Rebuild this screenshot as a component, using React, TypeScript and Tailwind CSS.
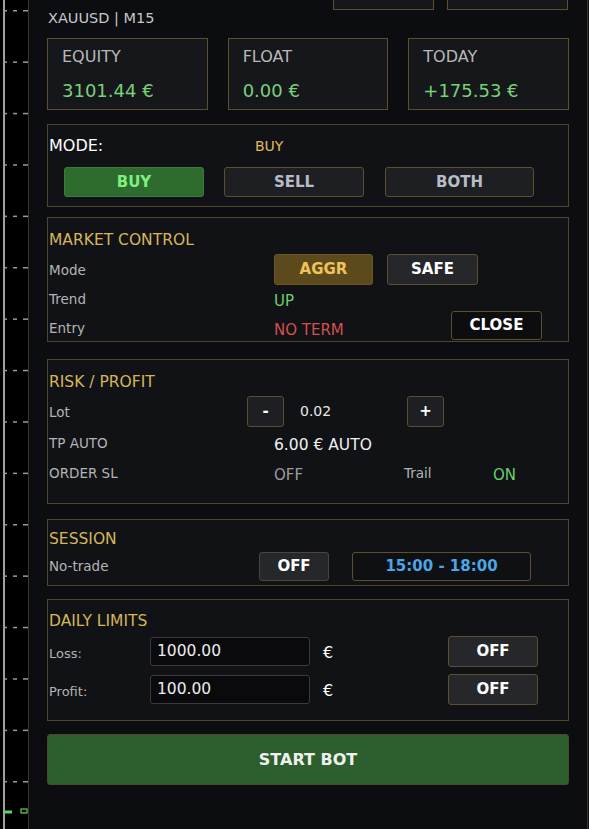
import React from "react";

const font = { fontFamily: '"DejaVu Sans", Verdana, sans-serif' };

// Chart price-axis strip on the left edge
function AxisStrip() {
  const ticks = Array.from({ length: 16 }, (_, i) => 10.5 + i * 51.4);
  return (
    <svg width="28" height="829" className="block shrink-0 bg-black">
      <rect x="3" y="0" width="2" height="829" fill="#a0a0a0" />
      {ticks.map((y) => (
        <g key={y} fill="#9a9a9a">
          <rect x="4" y={y - 0.5} width="3" height="1.5" />
          <rect x="13" y={y - 0.5} width="4" height="1.5" />
          <rect x="23" y={y - 0.5} width="5" height="1.5" />
        </g>
      ))}
      <rect x="4" y="810.5" width="8" height="3" fill="#5fd35f" />
      <rect x="21" y="809" width="6" height="4" fill="none" stroke="#5fd35f" strokeWidth="1.2" />
    </svg>
  );
}

function StatCard({ label, value }: { label: string; value: string }) {
  return (
    <div className="h-[72px] border border-[#5b4f2e] bg-[#16171b] pl-[14px] pt-[8px]">
      <div className="text-[16px] leading-[20px] text-[#b9b9b9]">{label}</div>
      <div className="mt-[12px] text-[18px] leading-[24px] text-[#78d178]">{value}</div>
    </div>
  );
}

function Section({ className, children }: { className?: string; children: React.ReactNode }) {
  return <div className={"border border-[#4f4529] bg-[#111216] pl-[1px] " + (className ?? "")}>{children}</div>;
}

function Title({ children }: { children: React.ReactNode }) {
  return <div className="h-[20px] text-[15.5px] leading-[20px] text-[#d6b65a]">{children}</div>;
}

function Btn({ className, children }: { className?: string; children: React.ReactNode }) {
  return (
    <div className={"flex items-center justify-center rounded-[3px] border font-bold text-[15px] " + (className ?? "")}>
      {children}
    </div>
  );
}

export default function App() {
  return (
    <div className="flex h-[829px] w-[589px] overflow-hidden bg-[#0b0c10]" style={font}>
      <AxisStrip />
      <div className="w-[560px] shrink-0 border-x border-[#3d3422] bg-[#0c0d11] px-[18px]">
        {/* buttons of the row above, scrolled out of view */}
        <div className="-mt-[20px] flex h-[30px] justify-end gap-[13px] pr-[1px]">
          <div className="w-[101px] border border-[#5b4f2e] bg-[#16171b]" />
          <div className="w-[121px] border border-[#5b4f2e] bg-[#16171b]" />
        </div>

        <div className="pl-[1px] text-[14.5px] leading-[16px] text-[#c8c8c8]">XAUUSD | M15</div>

        <div className="mt-[12px] grid grid-cols-3 gap-[20px]">
          <StatCard label="EQUITY" value="3101.44 €" />
          <StatCard label="FLOAT" value="0.00 €" />
          <StatCard label="TODAY" value="+175.53 €" />
        </div>

        {/* trade direction */}
        <Section className="mt-[14px] h-[83px] pt-[11px]">
          <div className="flex h-[20px] items-center">
            <span className="w-[206px] text-[16px] text-white">MODE:</span>
            <span className="text-[14px] text-[#e0b95a]">BUY</span>
          </div>
          <div className="mt-[11px] flex h-[30px] pl-[15px]">
            <Btn className="w-[140px] border-[#3f7a3a] bg-[#2e6b2e] text-[#7ef07e]">BUY</Btn>
            <Btn className="ml-[20px] w-[140px] border-[#5b4f2e] bg-[#1e1f23] text-[#b8bcc6]">SELL</Btn>
            <Btn className="ml-[21px] w-[149px] border-[#5b4f2e] bg-[#1e1f23] text-[#b8bcc6]">BOTH</Btn>
          </div>
        </Section>

        <Section className="mt-[10px] h-[125px] pt-[12px]">
          <Title>MARKET CONTROL</Title>
          <div className="mt-[4px] flex h-[31px] items-center">
            <span className="mt-[2px] w-[225px] text-[13.5px] text-[#b4b4b4]">Mode</span>
            <Btn className="h-full w-[99px] border-[#6b5826] bg-[#5c4a1c] text-[#efc35a]">AGGR</Btn>
            <Btn className="ml-[14px] h-full w-[91px] border-[#5b4f2e] bg-[#26272b] text-white">SAFE</Btn>
          </div>
          <div className="flex h-[26px] items-center">
            <span className="mt-[2px] w-[225px] text-[13.5px] text-[#b4b4b4]">Trend</span>
            <span className="mt-[6px] text-[15px] text-[#6ccf6c]">UP</span>
          </div>
          <div className="flex h-[29px] items-center">
            <span className="mt-[6px] w-[225px] text-[13.5px] text-[#b4b4b4]">Entry</span>
            <span className="mt-[10px] w-[177px] text-[15px] text-[#d2514f]">NO TERM</span>
            <Btn className="h-full w-[91px] border-[#5b4f2e] bg-[#0d0d10] text-white">CLOSE</Btn>
          </div>
        </Section>

        <Section className="mt-[17px] h-[145px] pt-[12px]">
          <Title>RISK / PROFIT</Title>
          <div className="mt-[4px] flex h-[31px] items-center">
            <span className="mt-[1px] w-[198px] text-[13.5px] text-[#b4b4b4]">Lot</span>
            <Btn className="h-full w-[37px] border-[#5b4f2e] bg-[#1e1f23] text-white">-</Btn>
            <span className="w-[123px] pl-[16px] text-[14px] text-[#e8e8e8]">0.02</span>
            <Btn className="h-full w-[37px] border-[#5b4f2e] bg-[#1e1f23] text-white">+</Btn>
          </div>
          <div className="mt-[4px] flex h-[24px] items-center">
            <span className="w-[225px] text-[13.5px] text-[#b4b4b4]">TP AUTO</span>
            <span className="mt-[5px] text-[15.5px] text-[#f0f0f0]">6.00 € AUTO</span>
          </div>
          <div className="mt-[6px] flex h-[24px] items-center">
            <span className="w-[225px] text-[13.5px] text-[#b4b4b4]">ORDER SL</span>
            <span className="mt-[4px] w-[130px] text-[15px] text-[#9c9c9c]">OFF</span>
            <span className="w-[89px] text-[13.5px] text-[#b4b4b4]">Trail</span>
            <span className="mt-[4px] text-[15px] text-[#6ccf6c]">ON</span>
          </div>
        </Section>

        <Section className="mt-[15px] h-[67px] pt-[9px]">
          <Title>SESSION</Title>
          <div className="mt-[3px] flex h-[29px] items-center">
            <span className="w-[210px] text-[13.5px] text-[#b4b4b4]">No-trade</span>
            <Btn className="h-full w-[70px] border-[#4a4540] bg-[#26272b] text-white">OFF</Btn>
            <Btn className="ml-[23px] h-full w-[179px] border-[#5b4f2e] bg-[#0f1013] text-[#4aa6e6]">
              15:00 - 18:00
            </Btn>
          </div>
        </Section>

        <Section className="mt-[13px] h-[122px] pt-[11px]">
          <Title>DAILY LIMITS</Title>
          {[
            ["Loss:", "1000.00", "mt-[5px]"],
            ["Profit:", "100.00", "mt-[7px]"],
          ].map(([label, value, mt]) => (
            <div key={label} className={"flex h-[31px] items-center " + mt}>
              <span className="mt-[4px] w-[101px] text-[13px] text-[#b4b4b4]">{label}</span>
              <div className="flex h-[29px] w-[160px] items-center rounded-[3px] border border-[#3a3b40] bg-[#0a0a0d] pl-[6px] text-[15.5px] text-[#ececec]">
                {value}
              </div>
              <span className="ml-[13px] mt-[3px] w-[125px] text-[16px] text-white">€</span>
              <Btn className="h-full w-[90px] border-[#5b4f2e] bg-[#26272b] text-white">OFF</Btn>
            </div>
          ))}
        </Section>

        <div className="mt-[13px] flex h-[51px] items-center justify-center rounded-[3px] border border-[#4f4529] bg-[#2d5e2d] text-[16px] font-bold text-[#eef2ee]">
          START BOT
        </div>
      </div>
    </div>
  );
}
